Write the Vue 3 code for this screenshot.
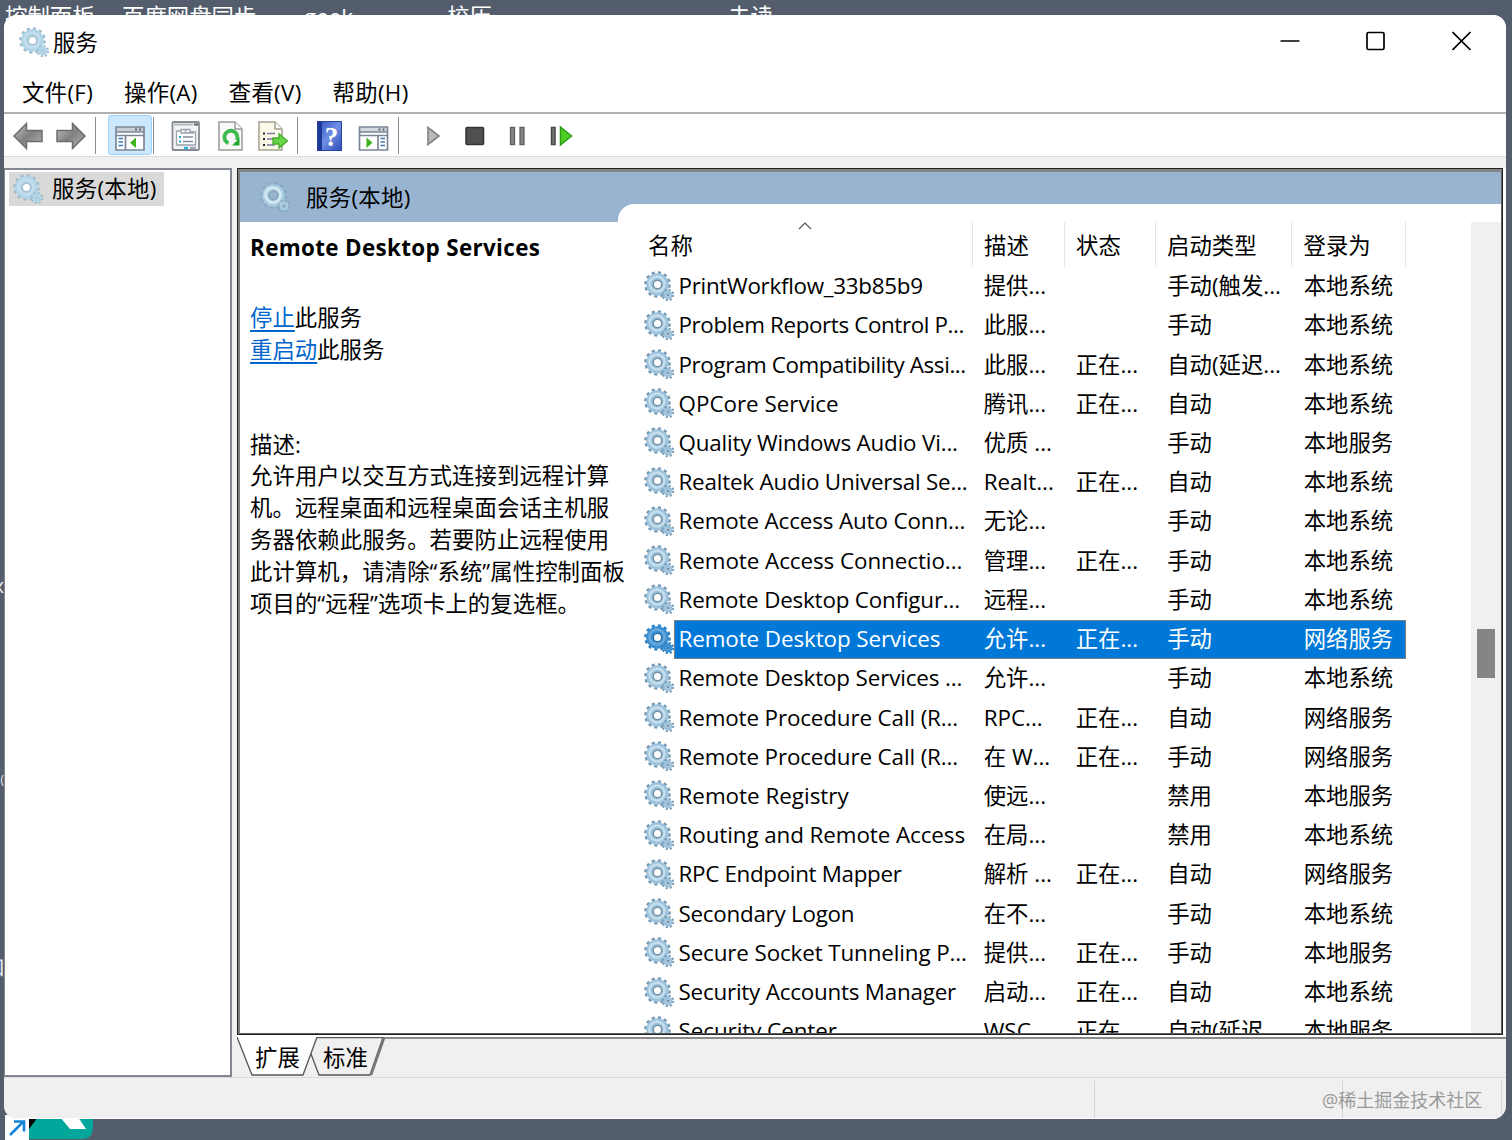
<template>
  <div class="desktop">
    <span
      v-for="label in desktopLabels"
      :key="label.text"
      class="desktop-label"
      :style="{ left: label.x + 'px' }"
      >{{ label.text }}</span
    >
    <span class="edge-label edge-x">x</span>
    <span class="edge-label edge-paren">(</span>
    <span class="edge-label edge-box">口</span>
    <svg class="shortcut" width="96" height="30" viewBox="0 0 96 30">
      <path d="M28 0H93V15Q93 28 82 28H28Z" fill="#02a79c" />
      <path d="M29 6H38L29 18Z" fill="#000" />
      <path d="M60 6H78L86 18H70Z" fill="#fff" />
      <rect x="5" y="4" width="24" height="26" fill="#fff" />
      <path
        d="M10 24L23 11M14 10.500H24V20.500"
        fill="none"
        stroke="#1583d8"
        stroke-width="2.600"
      />
    </svg>

    <svg class="defs" width="0" height="0">
      <symbol id="gear" viewBox="0 0 30 30">
        <circle class="g-teeth" cx="13.500" cy="13.500" r="11.800" />
        <circle class="g-body" cx="13.500" cy="13.500" r="8" />
        <circle class="g-shine" cx="13" cy="13" r="7.500" />
        <circle class="g-hole" cx="13.500" cy="13.500" r="4.300" />
        <circle class="g-small-teeth" cx="24" cy="24" r="5.200" />
        <circle class="g-small" cx="24" cy="24" r="3" />
        <circle class="g-dot" cx="24" cy="24" r="1.300" />
      </symbol>
      <linearGradient id="arrowFill" x1="0" x2="1" y1="0" y2="1">
        <stop offset="0" stop-color="#c5c5c5" />
        <stop offset="0.500" stop-color="#808080" />
        <stop offset="1" stop-color="#b5b5b5" />
      </linearGradient>
      <linearGradient id="helpFill" x1="0" x2="1" y1="0" y2="1">
        <stop offset="0" stop-color="#2c4fc0" />
        <stop offset="0.500" stop-color="#6f8fe4" />
        <stop offset="1" stop-color="#2b48b4" />
      </linearGradient>
    </svg>

    <main class="window">
      <header class="title-bar">
        <svg class="gear gear-title"><use href="#gear" /></svg>
        <span class="title">服务</span>
        <div class="controls">
          <svg width="20" height="20" viewBox="0 0 20 20">
            <path d="M0.500 10H19.500" />
          </svg>
          <svg width="20" height="20" viewBox="0 0 20 20">
            <rect x="1" y="1.500" width="17" height="17" rx="1.500" />
          </svg>
          <svg width="20" height="20" viewBox="0 0 20 20">
            <path d="M0.500 1L18.500 19M18.500 1L0.500 19" />
          </svg>
        </div>
      </header>

      <nav class="menu">
        <span v-for="item in menu" :key="item">{{ item }}</span>
      </nav>

      <div class="toolbar">
        <div class="tool">
          <svg width="32" height="30" viewBox="0 0 32 30">
            <path
              d="M2 15L14.500 2.500V9.500H30V20.500H14.500V27.500Z"
              fill="url(#arrowFill)"
              stroke="#6c6c6c"
              stroke-width="1.500"
            />
          </svg>
        </div>
        <div class="tool">
          <svg width="32" height="30" viewBox="0 0 32 30">
            <path
              d="M29 15L16.500 2.500V9.500H1V20.500H16.500V27.500Z"
              fill="url(#arrowFill)"
              stroke="#6c6c6c"
              stroke-width="1.500"
            />
          </svg>
        </div>
        <i class="sep sep-a"></i>
        <div class="tool active">
          <svg width="32" height="30" viewBox="0 0 32 30">
            <rect x="2" y="6" width="28" height="23" fill="#fff" />
            <path d="M2 6H30V11H2Z" fill="#c9cfd6" />
            <path
              d="M2 6H30V29H2ZM2 11H30M2 14.500H30M11.500 15V29"
              fill="none"
              stroke="#7b8694"
              stroke-width="1.700"
            />
            <path d="M21 8.500H23M25 8.500H27" stroke="#59636e" stroke-width="2" />
            <path
              d="M4.500 17.500H9M4.500 21H9M4.500 24.500H9"
              stroke="#3a78bd"
              stroke-width="1.600"
            />
            <path d="M22 16.500V27L16 21.700Z" fill="#3db41b" />
          </svg>
        </div>
        <i class="sep sep-b"></i>
        <div class="tool">
          <svg width="32" height="30" viewBox="0 0 32 30">
            <rect
              x="2.500"
              y="1"
              width="26.500"
              height="28"
              rx="1"
              fill="#f3f4f5"
              stroke="#858b91"
              stroke-width="1.800"
            />
            <path d="M4 3.500H23" stroke="#b4bac1" stroke-width="2" />
            <path d="M24 3.500H28" stroke="#555e69" stroke-width="2" />
            <path
              d="M6.500 10V24H25.500V11H20V8.500H11V10ZM11 8.500V12H24M15.500 9V12M20 9V12"
              fill="#fff"
              stroke="#9aa3ae"
              stroke-width="1.300"
            />
            <path d="M9 16H11M9 20.500H11" stroke="#2a9dcc" stroke-width="2" />
            <path d="M13 16H23M13 20.500H23" stroke="#7e8b99" stroke-width="1.500" />
            <path d="M14 27H18" stroke="#26b5de" stroke-width="2.500" />
            <path d="M20 27H26" stroke="#9babb9" stroke-width="2.500" />
          </svg>
        </div>
        <div class="tool">
          <svg width="32" height="30" viewBox="0 0 32 30">
            <path
              d="M5 1H21L28 8V29H5Z"
              fill="#f8f8f6"
              stroke="#9b9b9b"
              stroke-width="1.500"
            />
            <path d="M21 1V8H28" fill="#fff" stroke="#9b9b9b" stroke-width="1.500" />
            <path
              d="M14.500 22.300A6.500 6.500 0 1 1 22.800 19"
              fill="none"
              stroke="#3cba4e"
              stroke-width="3.800"
            />
            <path d="M18 24.500L25.500 24.500V17Z" fill="#20a832" />
          </svg>
        </div>
        <div class="tool">
          <svg width="32" height="30" viewBox="0 0 32 30">
            <path
              d="M2 1H18L25 8V29H2Z"
              fill="#fbf9e8"
              stroke="#a3a192"
              stroke-width="1.500"
            />
            <path d="M18 1V8H25" fill="#fff" stroke="#a3a192" stroke-width="1.500" />
            <path
              d="M6 12.500H8M6 18H8M6 24H8"
              stroke="#222"
              stroke-width="2"
            />
            <path
              d="M10 12.500H18M10 18H16M10 24H18"
              stroke="#777b9c"
              stroke-width="1.700"
            />
            <path
              d="M16 17H22V13L30.500 20L22 27V23H16Z"
              fill="#6bd54a"
              stroke="#45ad29"
              stroke-width="1.300"
            />
          </svg>
        </div>
        <i class="sep sep-c"></i>
        <div class="tool help">
          <svg width="32" height="30" viewBox="0 0 32 30">
            <rect x="3" y="0" width="25" height="30" fill="url(#helpFill)" />
            <rect x="3" y="0" width="5" height="30" fill="#1d3996" />
            <path d="M3.500 0.500H27.500V29.500H3.500Z" fill="none" stroke="#2443a0" />
            <text x="17.500" y="25" text-anchor="middle">?</text>
          </svg>
        </div>
        <div class="tool">
          <svg width="32" height="30" viewBox="0 0 32 30">
            <rect x="2.500" y="6" width="28" height="23" fill="#fff" />
            <path d="M2.500 6H30.500V11H2.500Z" fill="#d4d9df" />
            <path
              d="M2.500 6H30.500V29H2.500ZM2.500 11H30.500M2.500 14.500H30.500M21 15V29"
              fill="none"
              stroke="#7b8694"
              stroke-width="1.700"
            />
            <path d="M21.500 8.500H23.500M25.500 8.500H27.500" stroke="#59636e" stroke-width="2" />
            <path
              d="M23.500 17.500H28M23.500 21H28M23.500 24.500H28"
              stroke="#3a78bd"
              stroke-width="1.600"
            />
            <path d="M9.500 16.500V27L15.500 21.700Z" fill="#3db41b" />
          </svg>
        </div>
        <i class="sep sep-d"></i>
        <div class="tool run">
          <svg width="32" height="30" viewBox="0 0 32 30">
            <path
              d="M11 6.500V23.500L22 15Z"
              fill="#b9b9b9"
              stroke="#858585"
              stroke-width="1.700"
            />
          </svg>
        </div>
        <div class="tool run">
          <svg width="32" height="30" viewBox="0 0 32 30">
            <rect
              x="6"
              y="6.500"
              width="17.500"
              height="17"
              rx="1"
              fill="#505050"
              stroke="#333"
              stroke-width="1.500"
            />
          </svg>
        </div>
        <div class="tool run">
          <svg width="32" height="30" viewBox="0 0 32 30">
            <path
              d="M7.500 6.500H11.500V23.500H7.500ZM17 6.500H21V23.500H17Z"
              fill="#858585"
              stroke="#606060"
              stroke-width="1.300"
            />
          </svg>
        </div>
        <div class="tool run">
          <svg width="32" height="30" viewBox="0 0 32 30">
            <path
              d="M6.500 6.500H10V23.500H6.500Z"
              fill="#777"
              stroke="#444"
              stroke-width="1.500"
            />
            <path
              d="M15.500 6V24L26.500 15Z"
              fill="#4fce25"
              stroke="#2f9e17"
              stroke-width="1.500"
            />
          </svg>
        </div>
      </div>

      <div class="body">
        <aside class="tree">
          <div class="tree-item">
            <svg class="gear gear-tree"><use href="#gear" /></svg>
            <span>服务(本地)</span>
          </div>
        </aside>

        <section class="content">
          <div class="pane">
            <div class="pane-head">
              <svg class="gear gear-head"><use href="#gear" /></svg>
              <span class="pane-title">服务(本地)</span>
              <div class="pane-notch"></div>
            </div>
            <div class="pane-main">
              <div class="details">
                <h2>Remote Desktop Services</h2>
                <p class="actions">
                  <a>停止</a>此服务<br />
                  <a>重启动</a>此服务
                </p>
                <p class="description">
                  描述:<br />
                  <template v-for="line in description" :key="line"
                    >{{ line }}<br
                  /></template>
                </p>
              </div>

              <div class="list">
                <div class="row list-head">
                  <span class="col c-name"
                    >名称
                    <svg class="sort" width="14" height="8" viewBox="0 0 14 8">
                      <path d="M1 7L7 1L13 7" />
                    </svg>
                  </span>
                  <span class="col c-desc">描述</span>
                  <span class="col c-state">状态</span>
                  <span class="col c-start">启动类型</span>
                  <span class="col c-logon">登录为</span>
                </div>
                <div
                  v-for="(service, i) in services"
                  :key="i"
                  class="row"
                  :class="{ selected: i === selected }"
                  @click="selected = i"
                >
                  <svg class="gear"><use href="#gear" /></svg>
                  <div class="cells">
                    <span class="name"
                      ><span
                        :style="{ letterSpacing: service[5] + 'px' }"
                        >{{ service[0] }}</span
                      ></span
                    >
                    <span class="desc">{{ service[1] }}</span>
                    <span class="state">{{ service[2] }}</span>
                    <span class="start">{{ service[3] }}</span>
                    <span class="logon">{{ service[4] }}</span>
                  </div>
                </div>
              </div>

              <div class="scrollbar"><div class="thumb"></div></div>
            </div>
          </div>

          <div class="tabs">
            <svg width="150" height="40" viewBox="0 0 150 40">
              <path d="M75 0.500H146L133 38H82L74 17Z" fill="#f0f0f0" />
              <path
                d="M79 0.500H146L133 38H82L74 17"
                fill="none"
                stroke="#555"
                stroke-width="1.300"
              />
              <path d="M147 1L134 38" stroke="#777" stroke-width="2.500" />
              <path d="M0 0H80L66 38H15Z" fill="#fff" />
              <path
                d="M0 0L15 38H66L80 0"
                fill="none"
                stroke="#555"
                stroke-width="1.300"
              />
            </svg>
            <span class="tab tab-extended">扩展</span>
            <span class="tab tab-standard">标准</span>
          </div>
        </section>
      </div>

      <footer class="status">
        <div class="status-a"></div>
        <div class="status-b"></div>
        <div class="status-c"></div>
        <span class="watermark">@稀土掘金技术社区</span>
      </footer>
    </main>
  </div>
</template>

<script setup>
import { ref } from "vue";

const desktopLabels = [
  { text: "控制面板", x: 5 },
  { text: "百度网盘同步", x: 122 },
  { text: "geek", x: 304 },
  { text: "校历", x: 447 },
  { text: "去读", x: 728 },
];

const menu = ["文件(F)", "操作(A)", "查看(V)", "帮助(H)"];

const description = [
  "允许用户以交互方式连接到远程计算",
  "机。远程桌面和远程桌面会话主机服",
  "务器依赖此服务。若要防止远程使用",
  "此计算机，请清除“系统”属性控制面板",
  "项目的“远程”选项卡上的复选框。",
];

const selected = ref(9);

// name, description, state, startup type, log on as, tracking
const services = [
  ["PrintWorkflow_33b85b9", "提供...", "", "手动(触发...", "本地系统", -0.29],
  ["Problem Reports Control P...", "此服...", "", "手动", "本地系统", -0.38],
  ["Program Compatibility Assi...", "此服...", "正在...", "自动(延迟...", "本地系统", -0.4],
  ["QPCore Service", "腾讯...", "正在...", "自动", "本地系统", 0],
  ["Quality Windows Audio Vi...", "优质 ...", "", "手动", "本地服务", -0.18],
  ["Realtek Audio Universal Se...", "Realt...", "正在...", "自动", "本地系统", -0.2],
  ["Remote Access Auto Conn...", "无论...", "", "手动", "本地系统", -0.13],
  ["Remote Access Connectio...", "管理...", "正在...", "手动", "本地系统", -0.06],
  ["Remote Desktop Configur...", "远程...", "", "手动", "本地系统", -0.19],
  ["Remote Desktop Services", "允许...", "正在...", "手动", "网络服务", -0.09],
  ["Remote Desktop Services ...", "允许...", "", "手动", "本地系统", -0.14],
  ["Remote Procedure Call (R...", "RPC...", "正在...", "自动", "网络服务", -0.13],
  ["Remote Procedure Call (R...", "在 W...", "正在...", "手动", "网络服务", -0.13],
  ["Remote Registry", "使远...", "", "禁用", "本地服务", 0],
  ["Routing and Remote Access", "在局...", "", "禁用", "本地系统", -0.08],
  ["RPC Endpoint Mapper", "解析 ...", "正在...", "自动", "网络服务", -0.32],
  ["Secondary Logon", "在不...", "", "手动", "本地系统", -0.26],
  ["Secure Socket Tunneling P...", "提供...", "正在...", "手动", "本地服务", -0.12],
  ["Security Accounts Manager", "启动...", "正在...", "自动", "本地系统", -0.21],
  ["Security Center", "WSC", "正在", "自动(延迟", "本地服务", -0.06],
];
</script>

<style>
body {
  background: #535d6c;
}
</style>

<style scoped>
.desktop {
  position: relative;
  box-sizing: border-box;
  width: 1512px;
  height: 1140px;
  padding: 15px 6px 21px 4px;
  overflow: hidden;
  background: #535d6c;
  font-family: "Open Sans", "Noto Sans CJK SC", sans-serif;
  font-size: 22.4px;
  color: #000;
  white-space: nowrap;
}

.desktop-label {
  position: absolute;
  top: 2px;
  line-height: 30px;
  color: #fff;
}

.edge-label {
  position: absolute;
  right: 1508px;
  font-size: 20px;
  line-height: 24px;
  color: #e8ecf2;
}

.edge-x {
  top: 574px;
}

.edge-paren {
  top: 768px;
  font-size: 12px;
}

.edge-box {
  top: 956px;
  right: 1507px;
}

.shortcut {
  position: absolute;
  left: 0;
  top: 1111px;
}

.defs {
  position: absolute;
}

.window {
  position: relative;
  display: flex;
  flex-direction: column;
  height: 1104px;
  overflow: hidden;
  border-radius: 13px;
  background: #f0f0f0;
}

.gear {
  --teeth: #7397b0;
  --body: #9dc3dc;
  --shine: #c4deed;
  --hole: #fff;
  --rim: #7190a5;
  flex: none;
  width: 30px;
  height: 30px;
}

.g-teeth {
  fill: none;
  stroke: var(--teeth);
  stroke-width: 3;
  stroke-dasharray: 3.1 3.08;
}

.g-body {
  fill: none;
  stroke: var(--body);
  stroke-width: 6.5;
}

.g-shine {
  fill: none;
  stroke: var(--shine);
  stroke-width: 2.5;
}

.g-hole {
  fill: var(--hole);
  stroke: var(--rim);
  stroke-width: 1.6;
}

.g-small-teeth {
  fill: none;
  stroke: var(--teeth);
  stroke-width: 2.2;
  stroke-dasharray: 2 2.08;
}

.g-small {
  fill: none;
  stroke: var(--body);
  stroke-width: 3;
}

.g-dot {
  fill: var(--rim);
}

.title-bar {
  display: flex;
  flex: none;
  align-items: flex-start;
  height: 56px;
  padding: 12px 34px 0 15px;
  box-sizing: border-box;
  background: #fff;
}

.gear-title,
.gear-tree {
  --teeth: #9ebccd;
  --body: #b0d5e9;
  --rim: #a6bfd0;
}

.title {
  margin-left: 4px;
  line-height: 32px;
}

.controls {
  display: flex;
  gap: 66px;
  margin-left: auto;
  margin-top: 4px;
}

.controls svg {
  fill: none;
  stroke: #000;
  stroke-width: 1.7;
}

.menu {
  display: flex;
  flex: none;
  gap: 31px;
  height: 41px;
  padding-left: 18px;
  line-height: 43px;
  letter-spacing: 0.3px;
  background: #fff;
  border-bottom: 2px solid #b1b1b1;
}

.toolbar {
  display: flex;
  flex: none;
  align-items: center;
  height: 42px;
  padding-left: 2.5px;
  background: #fff;
  border-bottom: 1px solid #dcdcdc;
}

.tool {
  display: flex;
  flex: none;
  align-items: center;
  justify-content: center;
  width: 43.5px;
  height: 40px;
  padding-top: 2px;
  box-sizing: border-box;
}

.tool.active {
  width: 44px;
  background: #cce8ff;
  border: 1.5px solid #99d1ff;
  border-radius: 3px;
}

.tool.run {
  width: 42.7px;
}

.help text {
  font: bold 27px "Liberation Serif", serif;
  fill: #fff;
}

.sep {
  flex: none;
  width: 1px;
  height: 37px;
  background: #8b8b8b;
}

.sep-a {
  margin: 0 12px 0 1px;
}

.sep-b {
  margin: 0 11px 0 1px;
}

.sep-c {
  margin: 0 10px 0 2px;
}

.sep-d {
  margin: 0 13px 0 3px;
}

.body {
  display: flex;
  flex: none;
  height: 909px;
  margin-top: 11px;
}

.tree {
  flex: none;
  box-sizing: border-box;
  width: 228px;
  height: 909px;
  padding: 2px 3px;
  background: #fff;
  border: 2px solid #828790;
  border-left-width: 1px;
}

.tree-item {
  display: flex;
  align-items: center;
  box-sizing: border-box;
  width: 155px;
  height: 34px;
  padding-left: 4px;
  margin-left: 1px;
  background: #d9d9d9;
  line-height: 36px;
  letter-spacing: 0.3px;
}

.tree-item span {
  margin-left: 9px;
}

.content {
  flex: 1;
  margin-left: 5px;
}

.pane {
  display: flex;
  flex-direction: column;
  box-sizing: border-box;
  width: 1266px;
  height: 867px;
  border: 2px solid #5f5f5f;
  border-top: 4px solid #848484;
  border-left: 3px solid #7b7b7b;
  background: #fff;
  box-shadow: 4px 0 0 #fff;
  outline: 1px solid #222;
  outline-offset: -1px;
}

.pane-head {
  display: flex;
  flex: none;
  height: 50px;
  background: #99b4d1;
  line-height: 52px;
  letter-spacing: 0.3px;
}

.gear-head {
  --teeth: #86a5bd;
  --body: #a9cde0;
  --shine: #d5e9f2;
  --hole: #99b4d1;
  --rim: #86a3bb;
  margin: 10px 0 0 20px;
}

.pane-title {
  width: 312px;
  margin-left: 16px;
}

.pane-notch {
  flex: 1;
  align-self: flex-end;
  height: 18px;
  background: #fff;
  border-radius: 16px 0 0 0;
}

.pane-main {
  display: flex;
  flex: none;
  height: 811px;
  overflow: hidden;
}

.details {
  flex: none;
  width: 404px;
  padding-left: 10px;
  box-sizing: border-box;
  line-height: 31.8px;
}

.details h2 {
  margin: 10px 0 0;
  font-size: 22.4px;
  line-height: 32px;
  font-weight: 700;
  letter-spacing: 0.35px;
}

.actions {
  margin: 38px 0 0;
}

.actions a {
  color: #0066cc;
  text-decoration: underline;
  text-underline-offset: 4px;
}

.description {
  margin: 63px 0 0;
  letter-spacing: 0.06px;
}

.list {
  flex: none;
  width: 827px;
}

.row {
  display: flex;
  align-items: center;
  height: 39.23px;
}

.list-head {
  height: 45px;
}

.col {
  position: relative;
  box-sizing: border-box;
  height: 45px;
  line-height: 47px;
  padding-left: 11.5px;
  border-right: 1px solid #e5e5e5;
}

.c-name {
  width: 328.5px;
  padding-left: 4px;
}

.c-desc {
  width: 92px;
}

.c-state {
  width: 91px;
}

.c-start {
  width: 136.5px;
}

.c-logon {
  width: 114px;
}

.sort {
  position: absolute;
  left: 154px;
  top: 0;
  fill: none;
  stroke: #555;
  stroke-width: 1.2;
}

.row .gear {
  margin-top: -2px;
}

.cells {
  display: flex;
  box-sizing: border-box;
  width: 732px;
  height: 39px;
  padding-left: 4.5px;
  line-height: 37px;
}

.name {
  width: 305.2px;
}

.desc {
  width: 92px;
}

.state {
  width: 91.5px;
}

.start {
  width: 136.5px;
}

.desc,
.state,
.start,
.logon {
  line-height: 38.5px;
}

.selected .cells {
  color: #fff;
  background: #0078d7;
  box-shadow: inset 0 0 0 1px #7b8186;
}

.selected .gear {
  --teeth: #2c7fc0;
  --body: #3c8fd0;
  --shine: #66a9dc;
  --rim: #226fae;
}

.scrollbar {
  flex: none;
  width: 30px;
  background: #f0f0f0;
}

.thumb {
  width: 18px;
  height: 49px;
  margin: 407px 0 0 6px;
  background: #858585;
}

.tabs {
  position: relative;
  height: 39px;
  margin-top: 2px;
  border-top: 2px solid #8a8a8a;
  box-shadow: 0 -2px 0 #fff;
}

.tabs svg {
  display: block;
  margin-top: -2px;
}

.tab {
  position: absolute;
  top: 1px;
  line-height: 36px;
}

.tab-extended {
  left: 18px;
}

.tab-standard {
  left: 86px;
}

.status {
  position: relative;
  display: flex;
  flex: 1;
  padding-top: 3px;
  border-top: 1px solid #dadada;
  box-shadow: inset 0 -1px 0 #fff;
}

.status div {
  box-sizing: border-box;
  height: 37px;
  border-right: 1px solid #d5d5d5;
}

.status-a {
  width: 1091px;
}

.status-b {
  width: 248px;
}

.status-c {
  width: 159px;
}

.watermark {
  position: absolute;
  left: 1318px;
  top: 6px;
  font-size: 18px;
  line-height: 32px;
  color: #999;
}
</style>
